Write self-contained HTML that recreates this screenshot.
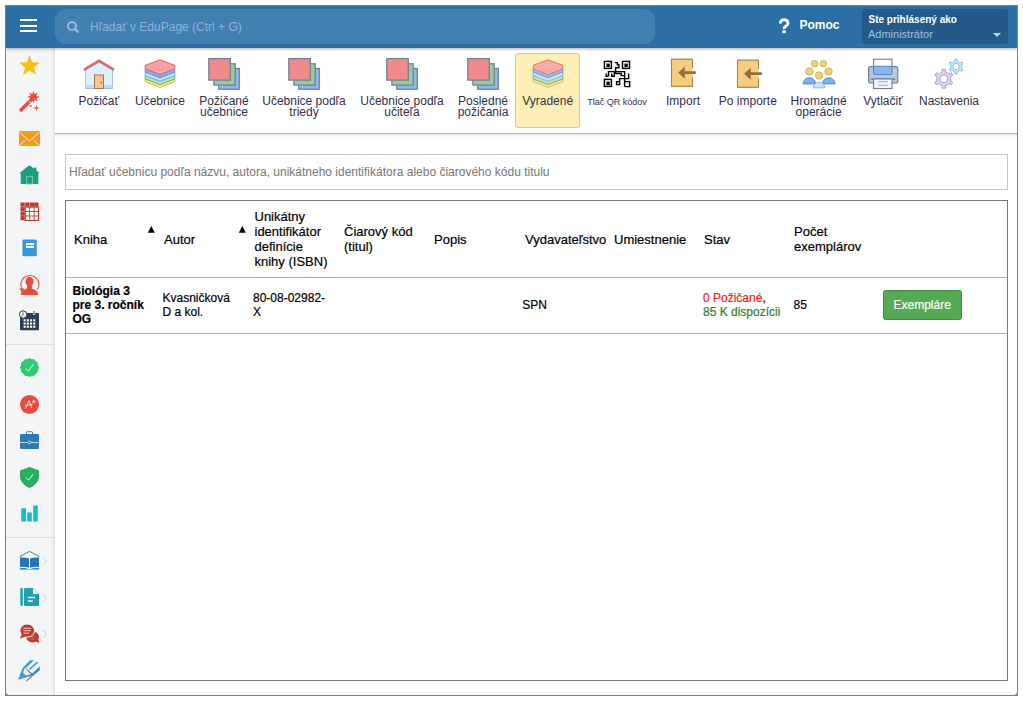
<!DOCTYPE html>
<html><head><meta charset="utf-8">
<style>
*{box-sizing:border-box;margin:0;padding:0}
html,body{width:1023px;height:701px;background:#fff;overflow:hidden;font-family:"Liberation Sans",sans-serif}
.a{position:absolute;white-space:nowrap}
#frame{position:absolute;left:5px;top:5px;width:1013px;height:691px;border:1px solid #808080;z-index:50}
#clip{position:absolute;left:0;top:0;width:1023px;height:701px;clip-path:inset(6px 6px 6px 6px)}
#hdr{position:absolute;left:6px;top:6px;width:1011px;height:42px;background:#2c6fa5;border-bottom:1px solid #2a68a0;z-index:6;box-shadow:0 1px 3px rgba(0,0,0,.33)}
#side{position:absolute;left:6px;top:48px;width:49px;height:647px;background:#f4f5f7;box-shadow:inset -2px 0 2px rgba(0,0,0,.04);border-right:1px solid #e0e1e3;z-index:4;}
#tb{position:absolute;left:54px;top:48px;width:963px;height:86px;background:#fff;border-bottom:1px solid #b9b9b9;box-shadow:0 1px 3px rgba(0,0,0,.13);z-index:2}
.lab{position:absolute;width:120px;text-align:center;white-space:nowrap;z-index:3}
.c{position:absolute;white-space:nowrap;color:#000;z-index:3;-webkit-text-stroke:0.2px currentColor}
</style></head><body>
<div id="frame"></div>
<svg class="a" style="left:0;top:0;z-index:51" width="1023" height="701"><path d="M1017 692.5 L1017 695 L1014.5 695 Z" fill="#9a9a9a"/><path d="M6 692.5 L6 695 L8.5 695 Z" fill="#9a9a9a"/></svg>
<div id="clip">
<div id="hdr">
  <div class="a" style="left:14px;top:13px;width:17px;height:2px;background:#fff"></div>
  <div class="a" style="left:14px;top:18.5px;width:17px;height:2px;background:#fff"></div>
  <div class="a" style="left:14px;top:23.7px;width:17px;height:2px;background:#fff"></div>
  <div class="a" style="left:49px;top:3px;width:600px;height:35px;background:#4280b0;border-radius:11px"></div>
  <svg class="a" style="left:58px;top:12px" width="16" height="16" viewBox="0 0 16 16"><circle cx="8" cy="8" r="4" fill="none" stroke="#93b8d9" stroke-width="2.2"/><path d="M11 11 L13.6 13.6" stroke="#93b8d9" stroke-width="2.5" stroke-linecap="round"/></svg>
  <div class="a" style="left:84px;top:14px;font-size:12px;line-height:14px;color:#8ab3d8">Hľadať v EduPage (Ctrl + G)</div>
  <svg class="a" style="left:768px;top:9px" width="20" height="20" viewBox="0 0 20 20"><path d="M6.3 8.4 C6.3 5.6 8 4.7 10 4.7 C12.6 4.7 14 6.2 14 8.2 C14 10.6 11.3 11.2 10.3 12.6 V14" fill="none" stroke="#fff" stroke-width="2.9"/><rect x="8.3" y="15.3" width="3.5" height="2.9" rx="0.8" fill="#fff"/></svg>
  <div class="a" style="left:793.4px;top:12px;font-size:12px;line-height:14px;font-weight:bold;color:#fff">Pomoc</div>
  <div class="a" style="left:856px;top:3px;width:146px;height:35px;background:#245a88;border-radius:3px"></div>
  <div class="a" style="left:862.5px;top:8px;font-size:10px;line-height:12px;font-weight:bold;color:#fff">Ste prihlásený ako</div>
  <div class="a" style="left:862px;top:22px;font-size:11px;line-height:13px;color:#9cc0e4">Administrátor</div>
  <div class="a" style="left:987px;top:27px;width:0;height:0;border-left:4px solid transparent;border-right:4px solid transparent;border-top:4px solid #d0d0d0"></div>
</div>
<div id="side"></div>
<div style="position:absolute;left:0;top:0;z-index:5"><svg style="position:absolute;left:0px;top:0px" width="60" height="701" viewBox="0 0 60 701" ><path d="M29.50 55.00 L32.20 62.28 L39.96 62.60 L33.87 67.42 L35.97 74.90 L29.50 70.60 L23.03 74.90 L25.13 67.42 L19.04 62.60 L26.80 62.28Z" fill="#f5c211"/><path d="M20 111 L32 99" stroke="#e74c3c" stroke-width="3.4"/><path d="M28.6 100.8 L31.4 103.6" stroke="#f4f5f7" stroke-width="0.9"/><path d="M33.50 90.80 L34.65 94.23 L37.88 92.62 L36.27 95.85 L39.70 97.00 L36.27 98.15 L37.88 101.38 L34.65 99.77 L33.50 103.20 L32.35 99.77 L29.12 101.38 L30.73 98.15 L27.30 97.00 L30.73 95.85 L29.12 92.62 L32.35 94.23Z" fill="#e74c3c"/><path d="M36.50 104.80 L37.21 107.29 L39.70 108.00 L37.21 108.71 L36.50 111.20 L35.79 108.71 L33.30 108.00 L35.79 107.29Z" fill="#e74c3c"/><circle cx="30.8" cy="106" r="0.9" fill="#e74c3c"/><rect x="19" y="131" width="21" height="15" fill="#f39c12"/><path d="M19.3 132 L29.5 141 L39.7 132 M19.3 145.6 L25.3 140 M39.7 145.6 L33.7 140" stroke="#fdebd0" stroke-width="1" fill="none"/><path d="M29.5 165.3 L39.6 173 H38.3 V184 H20.7 V173 H19.4 Z M34 167.5 H36.3 V171 L34 169.3 Z" fill="#1a9e82"/><rect x="26.6" y="176.4" width="5.8" height="7.6" fill="none" stroke="#7fcbbb" stroke-width="0.9"/><rect x="20.5" y="202.5" width="4.2" height="4.2" fill="#c0392b"/><rect x="20.5" y="207.1" width="4.2" height="4.2" fill="#c0392b"/><rect x="20.5" y="211.6" width="4.2" height="4.2" fill="#c0392b"/><rect x="20.5" y="216.1" width="4.2" height="4.2" fill="#c0392b"/><rect x="25.2" y="202.5" width="4.2" height="4.2" fill="#c0392b"/><rect x="29.8" y="202.5" width="4.2" height="4.2" fill="#c0392b"/><rect x="34.2" y="202.5" width="4.2" height="4.2" fill="#c0392b"/><rect x="25.2" y="207.1" width="13.3" height="13.4" fill="#fff" stroke="#c0392b" stroke-width="1.2"/><path d="M29.6 207 V220.5 M34.1 207 V220.5 M25.2 211.5 H38.5 M25.2 216 H38.5" stroke="#c0392b" stroke-width="0.9"/><rect x="22.2" y="239.5" width="14.6" height="16.8" rx="1.5" fill="#3498db"/><rect x="26" y="243" width="8" height="5" fill="#fff"/><path d="M26.5 245.5 H33.5" stroke="#3498db" stroke-width="0.9"/><path d="M21.3 243 H23 M21.3 245.5 H23 M21.3 248 H23 M21.3 250.5 H23 M21.3 253 H23" stroke="#fff" stroke-width="0.7"/><ellipse cx="29.5" cy="281.6" rx="4" ry="4.9" fill="#e74c3c"/><path d="M20.8 295 C20.8 290.6 24.3 289.6 27 288.4 V285.5 H32 V288.4 C34.7 289.6 38.2 290.6 38.2 295 Z" fill="#e74c3c"/><path d="M22 289 A9.1 9.1 0 1 1 37.2 290" fill="none" stroke="#e74c3c" stroke-width="1.1"/><path d="M19.6 288.3 L24.6 288.6 L21.5 292.4 Z" fill="#e74c3c"/><rect x="20" y="313" width="19" height="17.3" rx="1" fill="#2c3e50"/><rect x="23.6" y="319.3" width="2.1" height="2.1" fill="#fff"/><rect x="26.8" y="319.3" width="2.1" height="2.1" fill="#fff"/><rect x="30.0" y="319.3" width="2.1" height="2.1" fill="#fff"/><rect x="33.2" y="319.3" width="2.1" height="2.1" fill="#fff"/><rect x="23.6" y="322.5" width="2.1" height="2.1" fill="#fff"/><rect x="26.8" y="322.5" width="2.1" height="2.1" fill="#fff"/><rect x="30.0" y="322.5" width="2.1" height="2.1" fill="#fff"/><rect x="33.2" y="322.5" width="2.1" height="2.1" fill="#fff"/><rect x="23.6" y="325.7" width="2.1" height="2.1" fill="#fff"/><rect x="26.8" y="325.7" width="2.1" height="2.1" fill="#fff"/><rect x="30.0" y="325.7" width="2.1" height="2.1" fill="#fff"/><rect x="33.2" y="325.7" width="2.1" height="2.1" fill="#fff"/><path d="M34 311.5 V315" stroke="#f4f5f7" stroke-width="2.2"/><path d="M34 311 V314.5" stroke="#2c3e50" stroke-width="1"/><circle cx="23.1" cy="314.5" r="3.7" fill="#f4f5f7" stroke="#2c3e50" stroke-width="1"/><path d="M23.1 312.4 V314.7 L21.6 316.2" fill="none" stroke="#2c3e50" stroke-width="0.8"/><rect x="6" y="344" width="49" height="1" fill="#dcdcdc"/><rect x="6" y="537" width="49" height="1" fill="#dcdcdc"/><path d="M29.50 357.90 L31.73 359.19 L34.30 359.19 L35.58 361.42 L37.81 362.70 L37.81 365.27 L39.10 367.50 L37.81 369.73 L37.81 372.30 L35.58 373.58 L34.30 375.81 L31.73 375.81 L29.50 377.10 L27.27 375.81 L24.70 375.81 L23.42 373.58 L21.19 372.30 L21.19 369.73 L19.90 367.50 L21.19 365.27 L21.19 362.70 L23.42 361.42 L24.70 359.19 L27.27 359.19Z" fill="#2ecc71"/><circle cx="29.5" cy="367.5" r="8.8" fill="#2ecc71"/><path d="M25.5 368.5 L28.5 371 L33.5 364" fill="none" stroke="#fff" stroke-width="0.9"/><circle cx="29.5" cy="404.5" r="9.5" fill="#e74c3c"/><path d="M25.6 408.5 L29 400.5 L31.8 407.5 M25.2 405.6 L32.6 404.4 M33.8 399.9 V403.5 M32 401.7 H35.6" fill="none" stroke="#fde2de" stroke-width="1"/><rect x="20" y="434" width="19" height="15" rx="1.2" fill="#2a7ab9"/><path d="M26.5 434 V432.5 Q26.5 431.7 27.3 431.7 H31.7 Q32.5 431.7 32.5 432.5 V434" fill="none" stroke="#2a7ab9" stroke-width="1"/><path d="M20 442.5 H39" stroke="#e8f1f8" stroke-width="0.8"/><rect x="27.8" y="441.2" width="3.4" height="2.6" rx="1" fill="#2a7ab9" stroke="#e8f1f8" stroke-width="0.7"/><path d="M29.5 467 L39 470.5 V476 C39 482 34 486 29.5 488 C25 486 20 482 20 476 V470.5 Z" fill="#27ae60"/><path d="M26 477.5 L28.7 480 L33.3 474" fill="none" stroke="#fff" stroke-width="0.9"/><rect x="21.2" y="508.3" width="4.8" height="13.2" fill="#17b8d4"/><rect x="27.2" y="512.5" width="4.6" height="9" fill="#17b8d4"/><rect x="33.2" y="505.5" width="4.6" height="16" fill="#17b8d4"/><path d="M19.4 556.8 L29.5 551.3 L39.6 556.8" fill="none" stroke="#2574b8" stroke-width="0.9"/><path d="M20 557.6 Q24 557 29 558.5 V567.5 Q24 566.5 20 567 Z M30 558.5 Q35 557 39 557.6 V567 Q35 566.5 30 567.5 Z" fill="#2574b8"/><path d="M19.8 568.3 Q24.5 567.5 28.5 569 H30.5 Q34.5 567.5 39.2 568.3 V569.6 H19.8 Z" fill="#2574b8"/><rect x="20.3" y="588" width="2.5" height="18" rx="1" fill="#1fa1ae"/><path d="M25.2 588 H33 L39 594 V604.7 Q39 606 37.7 606 H25.3 Q24 606 24 604.7 V589.3 Q24 588 25.2 588 Z" fill="#1fa1ae"/><path d="M33 588.3 V594 H38.7 Z" fill="#f4f5f7"/><path d="M27.8 597.5 H35 M27.8 601 H33" stroke="#f4f5f7" stroke-width="1.3"/><ellipse cx="32.6" cy="637" rx="6.4" ry="5.4" fill="#c0392b"/><path d="M34.5 641 L39.6 643 L37.8 638.5 Z" fill="#c0392b"/><path d="M30.5 636.6 H35.5 M30.5 639 H34.5" stroke="#d98a80" stroke-width="0.7"/><ellipse cx="27.2" cy="630.6" rx="7.3" ry="6.6" fill="#c0392b" stroke="#f4f5f7" stroke-width="1"/><path d="M22 634 L19.8 638.7 L26 636.3 Z" fill="#c0392b"/><path d="M23.5 628.2 H31 M23.5 630.7 H31 M23.5 633.2 H29" stroke="#f6e3e0" stroke-width="0.9"/><path d="M42.7 557 L46.7 561 L42.7 565" fill="none" stroke="#c8c8c8" stroke-width="0.9"/><path d="M42.7 594.5 L46.7 598.5 L42.7 602.5" fill="none" stroke="#c8c8c8" stroke-width="0.9"/><path d="M42.7 630 L46.7 634 L42.7 638" fill="none" stroke="#c8c8c8" stroke-width="0.9"/><path d="M22.8 667.5 L30.2 660.2 H34 L25.6 668.6 Z" fill="#3d9be0"/><path d="M29.5 669.3 L37.5 662.1" stroke="#3d9be0" stroke-width="1.7"/><path d="M31.6 673.9 L39.8 666.4 V670 L33.5 675.6 Z" fill="#2f88d8"/><path d="M23.9 667.6 L19.6 678.3 L32.5 674.6" fill="none" stroke="#3d9be0" stroke-width="2"/><path d="M19.1 679 L22.2 671.5 L26.5 676.3 Z" fill="#3d9be0"/><path d="M26.3 669.1 L33 675.1 L26.3 681.1" fill="none" stroke="#7b7570" stroke-width="1.2"/></svg>
</div>
<div id="tb"></div>
<div style="position:absolute;left:0;top:0;z-index:3"><svg style="position:absolute;left:80px;top:55px" width="40" height="40" viewBox="0 0 40 40" ><path d="M5.5 14.5 L19 6.5 L32.5 14.5 V33.5 H5.5 Z" fill="#dbf1fd" stroke="#a3bfe3" stroke-width="1"/>
<rect x="5.5" y="30" width="27" height="3.5" fill="#bcdcf5"/>
<path d="M5.5 33.5 H32.5" stroke="#a3bfe3" stroke-width="1"/>
<path d="M4 14.8 L19 5.8 L34 14.8" fill="none" stroke="#e0646e" stroke-width="2.6"/>
<rect x="14.5" y="20" width="9" height="13.5" fill="#fcc397" stroke="#a9774f" stroke-width="1"/>
<circle cx="21.3" cy="27.8" r="0.7" fill="#6a4a30"/></svg>
<svg style="position:absolute;left:140px;top:55px" width="40" height="40" viewBox="0 0 40 40" ><path d="M5.2 23.9 L20 18.4 L34.8 23.9 V26.7 L20 32.4 L5.2 26.7 Z" fill="#fde58c" stroke="#d9b54e" stroke-width="1"/><path d="M5.2 20.5 L20 15.0 L34.8 20.5 V23.9 L20 29.599999999999998 L5.2 23.9 Z" fill="#b3dfb2" stroke="#6aae78" stroke-width="1"/><path d="M5.2 17.1 L20 11.600000000000001 L34.8 17.1 V20.5 L20 26.2 L5.2 20.5 Z" fill="#c5e5fd" stroke="#79a9ec" stroke-width="1"/><path d="M5.2 13.7 L20 8.2 L34.8 13.7 V17.099999999999998 L20 22.799999999999997 L5.2 17.099999999999998 Z" fill="#7fb0f2" stroke="#5a8ed6" stroke-width="1"/><path d="M5.2 10.3 L20 4.800000000000001 L34.8 10.3 V13.9 L20 19.6 L5.2 13.9 Z" fill="#f9a2a5" stroke="#df6169" stroke-width="1"/><path d="M5.7 10.5 L20 15.9 L34.3 10.5" fill="none" stroke="#ee8c90" stroke-width="0.8" opacity="0.7"/><circle cx="13.5" cy="10.3" r="0.45" fill="#e07a80"/><circle cx="17" cy="8.6" r="0.45" fill="#e07a80"/><circle cx="23.3" cy="11.5" r="0.45" fill="#e07a80"/><circle cx="27.8" cy="10.3" r="0.45" fill="#e07a80"/><circle cx="23.2" cy="8.1" r="0.45" fill="#e07a80"/></svg>
<svg style="position:absolute;left:204px;top:55px" width="40" height="40" viewBox="0 0 40 40" ><rect x="14.7" y="13.5" width="20.6" height="20.7" fill="#8ab8f2" stroke="#6f8397" stroke-width="1.3"/>
<rect x="9.9" y="8.8" width="21.3" height="21.3" fill="#9ec89a" stroke="#6f8397" stroke-width="1.3"/>
<rect x="4.8" y="3.6" width="21.5" height="21.5" fill="#f08a8b" stroke="#6f8397" stroke-width="1.3"/></svg>
<svg style="position:absolute;left:284px;top:55px" width="40" height="40" viewBox="0 0 40 40" ><rect x="14.7" y="13.5" width="20.6" height="20.7" fill="#8ab8f2" stroke="#6f8397" stroke-width="1.3"/>
<rect x="9.9" y="8.8" width="21.3" height="21.3" fill="#9ec89a" stroke="#6f8397" stroke-width="1.3"/>
<rect x="4.8" y="3.6" width="21.5" height="21.5" fill="#f08a8b" stroke="#6f8397" stroke-width="1.3"/></svg>
<svg style="position:absolute;left:382px;top:55px" width="40" height="40" viewBox="0 0 40 40" ><rect x="14.7" y="13.5" width="20.6" height="20.7" fill="#8ab8f2" stroke="#6f8397" stroke-width="1.3"/>
<rect x="9.9" y="8.8" width="21.3" height="21.3" fill="#9ec89a" stroke="#6f8397" stroke-width="1.3"/>
<rect x="4.8" y="3.6" width="21.5" height="21.5" fill="#f08a8b" stroke="#6f8397" stroke-width="1.3"/></svg>
<svg style="position:absolute;left:463px;top:55px" width="40" height="40" viewBox="0 0 40 40" ><rect x="14.7" y="13.5" width="20.6" height="20.7" fill="#8ab8f2" stroke="#6f8397" stroke-width="1.3"/>
<rect x="9.9" y="8.8" width="21.3" height="21.3" fill="#9ec89a" stroke="#6f8397" stroke-width="1.3"/>
<rect x="4.8" y="3.6" width="21.5" height="21.5" fill="#f08a8b" stroke="#6f8397" stroke-width="1.3"/></svg>
<div style="position:absolute;left:515px;top:53px;width:65px;height:75px;background:#fdefb6;border:1px solid #efc65c;border-radius:3px"></div>
<svg style="position:absolute;left:528px;top:55px" width="40" height="40" viewBox="0 0 40 40" opacity="0.85"><path d="M5.2 23.9 L20 18.4 L34.8 23.9 V26.7 L20 32.4 L5.2 26.7 Z" fill="#fde58c" stroke="#d9b54e" stroke-width="1"/><path d="M5.2 20.5 L20 15.0 L34.8 20.5 V23.9 L20 29.599999999999998 L5.2 23.9 Z" fill="#b3dfb2" stroke="#6aae78" stroke-width="1"/><path d="M5.2 17.1 L20 11.600000000000001 L34.8 17.1 V20.5 L20 26.2 L5.2 20.5 Z" fill="#c5e5fd" stroke="#79a9ec" stroke-width="1"/><path d="M5.2 13.7 L20 8.2 L34.8 13.7 V17.099999999999998 L20 22.799999999999997 L5.2 17.099999999999998 Z" fill="#7fb0f2" stroke="#5a8ed6" stroke-width="1"/><path d="M5.2 10.3 L20 4.800000000000001 L34.8 10.3 V13.9 L20 19.6 L5.2 13.9 Z" fill="#f9a2a5" stroke="#df6169" stroke-width="1"/><path d="M5.7 10.5 L20 15.9 L34.3 10.5" fill="none" stroke="#ee8c90" stroke-width="0.8" opacity="0.7"/><circle cx="13.5" cy="10.3" r="0.45" fill="#e07a80"/><circle cx="17" cy="8.6" r="0.45" fill="#e07a80"/><circle cx="23.3" cy="11.5" r="0.45" fill="#e07a80"/><circle cx="27.8" cy="10.3" r="0.45" fill="#e07a80"/><circle cx="23.2" cy="8.1" r="0.45" fill="#e07a80"/></svg>
<svg style="position:absolute;left:597px;top:55px" width="40" height="40" viewBox="0 0 40 40" ><g fill="none" stroke="#000" stroke-width="1.45">
<rect x="7.4" y="6.4" width="7" height="7"/><rect x="25.5" y="6.4" width="7" height="7"/><rect x="7.4" y="24.4" width="7" height="7"/>
<path d="M17.6 7.6 H20.3 V9.8 H21.9 V12.8 H18.6 V16.6 M11.5 21.2 V16.6 H27.6 V31.6 M9.2 18.4 V21.2 H11.5 M14.7 18.4 V21.2 H17.3 V16.6 M18.6 16.6 V18.4 H24.2 V20.6 H27.6 M31.6 18.4 V23.6 H22.6 V27 M27.6 26.6 H32.6 V31.6 H27.6 M19.6 26.6 H22.6 V29.6 H19.6 Z"/>
</g>
<rect x="9.4" y="8.6" width="3.4" height="3.4" fill="#000"/><rect x="27.4" y="8.6" width="3.4" height="3.4" fill="#000"/><rect x="9.4" y="26.6" width="3.4" height="3.4" fill="#000"/></svg>
<svg style="position:absolute;left:663px;top:55px" width="40" height="40" viewBox="0 0 40 40" ><path d="M8.5 4.2 H29.5 V13 M29.5 22.5 V31.2 H8.5 Z" fill="#f5cd80" stroke="#a88448" stroke-width="1"/>
<rect x="8.5" y="4.2" width="21" height="27" fill="#f5cd80"/>
<path d="M29.5 4.2 H8.5 V31.2 H29.5 V22.5 M29.5 13 V4.2" fill="none" stroke="#a88448" stroke-width="1.1"/>
<path d="M15.1 17.7 L21.7 11.7 V16.3 H32.8 V19.1 H21.7 V23.7 Z" fill="#8e7040"/></svg>
<svg style="position:absolute;left:729px;top:56px" width="40" height="40" viewBox="0 0 40 40" ><path d="M8.5 4.2 H29.5 V13 M29.5 22.5 V31.2 H8.5 Z" fill="#f5cd80" stroke="#a88448" stroke-width="1"/>
<rect x="8.5" y="4.2" width="21" height="27" fill="#f5cd80"/>
<path d="M29.5 4.2 H8.5 V31.2 H29.5 V22.5 M29.5 13 V4.2" fill="none" stroke="#a88448" stroke-width="1.1"/>
<path d="M15.1 17.7 L21.7 11.7 V16.3 H32.8 V19.1 H21.7 V23.7 Z" fill="#8e7040"/></svg>
<svg style="position:absolute;left:798px;top:55px" width="40" height="40" viewBox="0 0 40 40" ><g fill="#e8d479" stroke="#c9a94f" stroke-width="0.8">
<circle cx="16.5" cy="8.8" r="3.3"/><circle cx="25.4" cy="8.8" r="3.3"/>
<circle cx="11.4" cy="16.5" r="3.7"/><circle cx="30.5" cy="16.5" r="3.7"/><circle cx="21" cy="20.5" r="3.7"/></g>
<path d="M5.2 28.9 A6.2 6.2 0 0 1 17.6 28.9 Z" fill="#80b0ec" stroke="#4a80c8" stroke-width="0.9"/>
<path d="M24.6 28.9 A6.2 6.2 0 0 1 37 28.9 Z" fill="#80b0ec" stroke="#4a80c8" stroke-width="0.9"/>
<path d="M15.2 32.8 A5.8 5.8 0 0 1 26.8 32.8 Z" fill="#c2e5fc" stroke="#86b4e2" stroke-width="0.9"/></svg>
<svg style="position:absolute;left:862px;top:55px" width="40" height="40" viewBox="0 0 40 40" ><rect x="11.6" y="4.2" width="18.4" height="8" fill="#fff" stroke="#6b7f97" stroke-width="1.1"/>
<rect x="6.6" y="11.6" width="29.2" height="16.4" rx="2" fill="#b8c6d8" stroke="#6b7f97" stroke-width="1.1"/>
<rect x="11.6" y="11.3" width="18.4" height="8.2" rx="1.5" fill="#8ab6f0" stroke="#5a88c8" stroke-width="1.1"/>
<circle cx="32.6" cy="15.7" r="0.9" fill="#f6e27e"/>
<path d="M9.6 24.3 H32.6" stroke="#6b7f97" stroke-width="1.6" stroke-linecap="round"/>
<rect x="11.6" y="24" width="18.4" height="9.5" fill="#f4f8fb" stroke="#6b7f97" stroke-width="1.1"/>
<path d="M16 26.8 H26 M16 30.2 H26" stroke="#8fa1b4" stroke-width="0.9"/></svg>
<svg style="position:absolute;left:927px;top:52px" width="40" height="40" viewBox="0 0 40 40" ><path d="M13.30 20.74 L15.17 19.99 L15.27 17.32 L18.33 17.32 L18.43 19.99 L20.30 20.74 L21.88 21.98 L24.24 20.74 L25.77 23.39 L23.51 24.81 L23.80 26.80 L23.51 28.79 L25.77 30.21 L24.24 32.86 L21.88 31.62 L20.30 32.86 L18.43 33.61 L18.33 36.28 L15.27 36.28 L15.17 33.61 L13.30 32.86 L11.72 31.62 L9.36 32.86 L7.83 30.21 L10.09 28.79 L9.80 26.80 L10.09 24.81 L7.83 23.39 L9.36 20.74 L11.72 21.98 Z M20.7 26.8 A3.9 3.9 0 1 0 12.9 26.8 A3.9 3.9 0 1 0 20.7 26.8 Z" fill="#dcd2f4" fill-rule="evenodd" stroke="#a991d0" stroke-width="0.9"/>
<path d="M26.45 10.01 L27.86 9.45 L27.92 7.29 L30.28 7.29 L30.34 9.45 L31.75 10.01 L32.94 10.95 L34.84 9.92 L36.02 11.97 L34.18 13.09 L34.40 14.60 L34.18 16.11 L36.02 17.23 L34.84 19.28 L32.94 18.25 L31.75 19.19 L30.34 19.75 L30.28 21.91 L27.92 21.91 L27.86 19.75 L26.45 19.19 L25.26 18.25 L23.36 19.28 L22.18 17.23 L24.02 16.11 L23.80 14.60 L24.02 13.09 L22.18 11.97 L23.36 9.92 L25.26 10.95 Z M32.300000000000004 14.6 A3.2 3.2 0 1 0 25.900000000000002 14.6 A3.2 3.2 0 1 0 32.300000000000004 14.6 Z" fill="#c9ecfc" fill-rule="evenodd" stroke="#80b7d8" stroke-width="0.9"/></svg>
<div class="lab" style="left:38.75px;top:95.5px;font-size:12px;line-height:11px;color:#30304f">Požičať</div>
<div class="lab" style="left:100px;top:95.5px;font-size:12px;line-height:11px;color:#30304f">Učebnice</div>
<div class="lab" style="left:164px;top:95.5px;font-size:12px;line-height:11px;color:#30304f">Požičané<br>učebnice</div>
<div class="lab" style="left:244px;top:95.5px;font-size:12px;line-height:11px;color:#30304f">Učebnice podľa<br>triedy</div>
<div class="lab" style="left:342px;top:95.5px;font-size:12px;line-height:11px;color:#30304f">Učebnice podľa<br>učiteľa</div>
<div class="lab" style="left:423px;top:95.5px;font-size:12px;line-height:11px;color:#30304f">Posledné<br>požičania</div>
<div class="lab" style="left:487.70000000000005px;top:95.5px;font-size:12px;line-height:11px;color:#30304f">Vyradené</div>
<div class="lab" style="left:557px;top:96.5px;font-size:9px;line-height:11px;color:#30304f">Tlač QR kódov</div>
<div class="lab" style="left:623px;top:95.5px;font-size:12px;line-height:11px;color:#30304f">Import</div>
<div class="lab" style="left:687.8px;top:95.5px;font-size:12px;line-height:11px;color:#30304f">Po importe</div>
<div class="lab" style="left:758.6px;top:95.5px;font-size:12px;line-height:11px;color:#30304f">Hromadné<br>operácie</div>
<div class="lab" style="left:823px;top:95.5px;font-size:12px;line-height:11px;color:#30304f">Vytlačiť</div>
<div class="lab" style="left:889px;top:95.5px;font-size:12px;line-height:11px;color:#30304f">Nastavenia</div>
</div>
<div class="a" style="left:65px;top:154px;width:943px;height:36px;border:1px solid #c6c6c6"></div>
<div class="a" style="left:69px;top:165px;font-size:12px;line-height:14px;color:#777">Hľadať učebnicu podľa názvu, autora, unikátneho identifikátora alebo čiarového kódu titulu</div>
<div class="a" style="left:65px;top:200px;width:943px;height:481px;border:1px solid #777"></div>
<div class="a" style="left:66px;top:277px;width:941px;height:1px;background:#9dafc1"></div>
<div class="a" style="left:66px;top:333px;width:941px;height:1px;background:#9dafc1"></div>

<div class="c" style="left:74px;top:232px;font-size:13px;line-height:15px">Kniha</div>
<svg class="a" style="left:147px;top:226px" width="9" height="8" viewBox="0 0 9 8"><path d="M0.8 6.8 L4.3 0.1 L7.8 6.8 Z" fill="#000"/></svg>
<div class="c" style="left:164px;top:232px;font-size:13px;line-height:15px">Autor</div>
<svg class="a" style="left:237.5px;top:226px" width="9" height="8" viewBox="0 0 9 8"><path d="M0.8 6.8 L4.3 0.1 L7.8 6.8 Z" fill="#000"/></svg>
<div class="c" style="left:254.5px;top:209px;font-size:13px;line-height:15px">Unikátny<br>identifikátor<br>definície<br>knihy (ISBN)</div>
<div class="c" style="left:344px;top:224px;font-size:13px;line-height:15px">Čiarový kód<br>(titul)</div>
<div class="c" style="left:434px;top:232px;font-size:13px;line-height:15px">Popis</div>
<div class="c" style="left:525px;top:232px;font-size:13px;line-height:15px">Vydavateľstvo</div>
<div class="c" style="left:614px;top:232px;font-size:13px;line-height:15px">Umiestnenie</div>
<div class="c" style="left:704px;top:232px;font-size:13px;line-height:15px">Stav</div>
<div class="c" style="left:794px;top:224px;font-size:13px;line-height:15px">Počet<br>exemplárov</div>
<div class="c" style="left:72.5px;top:284px;font-size:12px;line-height:14px;font-weight:bold">Biológia 3<br>pre 3. ročník<br>OG</div>
<div class="c" style="left:162.5px;top:291px;font-size:12px;line-height:14px">Kvasničková<br>D a kol.</div>
<div class="c" style="left:253px;top:291px;font-size:12px;line-height:14px">80-08-02982-<br>X</div>
<div class="c" style="left:522.2px;top:298px;font-size:12px;line-height:14px">SPN</div>
<div class="c" style="left:703px;top:291px;font-size:12px;line-height:14px"><span style="color:#f02020">0 Požičané</span>,<br><span style="color:#2f7f2f">85 K dispozícii</span></div>
<div class="c" style="left:793.5px;top:298px;font-size:12px;line-height:14px">85</div>
<div class="a" style="left:883px;top:290px;width:79px;height:30px;background:#55ab55;border:1px solid #3d8b3d;border-radius:2.5px;z-index:3"></div>
<div class="c" style="left:893.5px;top:297.6px;font-size:12px;line-height:14px;color:#fff">Exempláre</div>

</div>
</body></html>
